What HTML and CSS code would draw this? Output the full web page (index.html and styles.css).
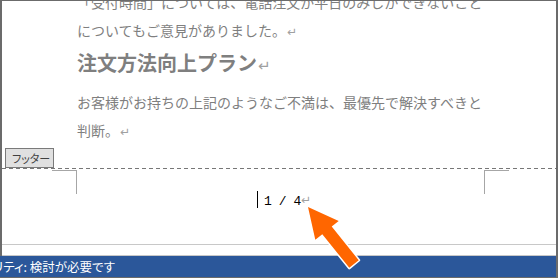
FILE: index.html
```html
<!DOCTYPE html>
<html lang="ja">
<head>
<meta charset="utf-8">
<title>Word footer</title>
<link rel="stylesheet" href="styles.css">
</head>
<body>
<div class="window">
  <div class="doc">
    <div class="text">
      <p class="para">「受付時間」については、電話注文が平日のみしかできないこと<br>についてもご意見がありました。<span class="ret">↵</span></p>
      <p class="heading">注文方法向上プラン<span class="ret ret-h">↵</span></p>
      <p class="para">お客様がお持ちの上記のようなご不満は、最優先で解決すべきと<br>判断。<span class="ret">↵</span></p>
    </div>
    <div class="tab">フッター</div>
    <div class="dash"></div>
    <div class="footer">
      <div class="mark mark-left"></div>
      <div class="pagenum">
        <span class="cursor"></span>
        <span class="num">1 / 4</span><span class="ret ret-n">↵</span>
      </div>
      <div class="mark mark-right"></div>
    </div>
    <div class="pagegap"></div>
  </div>
  <div class="status"><span class="status-text">リティ: 検討が必要です</span></div>
  <svg class="arrow" width="558" height="278" viewBox="0 0 558 278">
    <polygon points="308,207 338.7,221 331.7,226.6 358.7,260.2 349.3,267.8 322.3,234.2 315.3,239.8" fill="#ff6600" stroke="#ffffff" stroke-width="3" stroke-linejoin="round" paint-order="stroke"/>
  </svg>
</div>
</body>
</html>
```
FILE: styles.css
```css
* { box-sizing: border-box; }
html, body { margin: 0; padding: 0; }
body {
  width: 558px;
  height: 278px;
  overflow: hidden;
  background: #fff;
  font-family: "Noto Sans CJK JP", sans-serif;
}
.window {
  position: relative;
  width: 558px;
  height: 278px;
  display: flex;
  flex-direction: column;
  border-right: 2px solid #6b6b6b;
  border-bottom: 1px solid #6b6b6b;
}
.doc {
  flex: 1;
  min-height: 0;
  border-left: 2px solid #6b6b6b;
  border-top: 1px solid #6b6b6b;
  overflow: hidden;
  display: flex;
  flex-direction: column;
}
.text {
  padding-left: 75px;
  color: #7f7f7f;
  font-size: 14px;
  margin-top: -13px;
  white-space: nowrap;
}
.para { margin: 0; line-height: 28px; }
.heading {
  margin: 0 0 5px;
  font-size: 20px;
  font-weight: bold;
  line-height: 34px;
}
.ret {
  color: #a0a0a0;
  font-family: "DejaVu Sans", sans-serif;
  font-size: 12px;
  font-weight: normal;
  margin-left: 1px;
}
.ret-h { font-size: 15px; }
.tab {
  margin: 2px 0 0 3px;
  width: 49px;
  height: 20px;
  background: #e0e0e0;
  border: 1px solid #7a7a7a;
  font-size: 11px;
  line-height: 18px;
  color: #404040;
  padding-left: 6px;
  font-feature-settings: "palt";
}
.dash {
  height: 1px;
  background-image: linear-gradient(to right, #777 0 4px, transparent 4px 7px);
  background-size: 7px 1px;
}
.footer {
  display: flex;
  align-items: flex-start;
  margin-top: 1px;
}
.mark {
  width: 25px;
  height: 24px;
  border-top: 1px solid #a6a6a6;
}
.mark-left { margin-left: 50px; border-right: 1px solid #a6a6a6; }
.mark-right { margin-right: 47px; border-left: 1px solid #a6a6a6; }
.pagenum {
  flex: 1;
  display: flex;
  align-items: flex-start;
  margin-top: 21px;
  padding-left: 180px;
  height: 17px;
}
.cursor {
  width: 1px;
  height: 17px;
  background: #000;
  margin-right: 6px;
}
.num {
  font-family: "Liberation Mono", monospace;
  font-size: 13px;
  letter-spacing: -0.4px;
  line-height: 17px;
  padding-top: 2px;
  color: #000;
}
.ret-n { line-height: 17px; padding-top: 1px; font-size: 12px; margin-left: 0; }
.pagegap {
  margin-top: 36px;
  height: 16px;
  border-top: 1px solid #c8c8c8;
  border-bottom: 1px solid #c8c8c8;
}
.status {
  height: 21px;
  background: #2b579a;
  overflow: hidden;
  white-space: nowrap;
}
.status-text {
  display: block;
  margin-left: -7px;
  color: #fff;
  font-size: 12.5px;
  line-height: 21px;
  font-feature-settings: "palt";
}
.arrow {
  position: absolute;
  left: 0;
  top: 0;
  pointer-events: none;
}
```
